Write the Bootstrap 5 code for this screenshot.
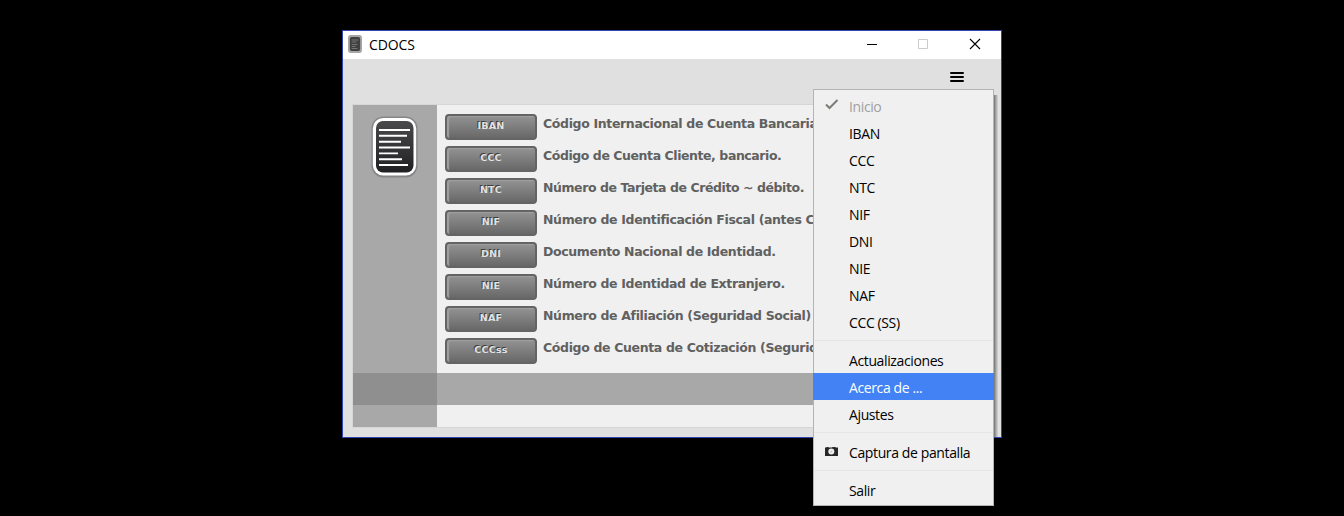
<!DOCTYPE html>
<html lang="es">
<head>
<meta charset="utf-8">
<title>CDOCS</title>
<link href="https://cdn.jsdelivr.net/npm/bootstrap@5.3.0/dist/css/bootstrap.min.css" rel="stylesheet">
<style>
body{background:#000;height:516px;overflow:hidden;font-family:"Open Sans","Noto Sans",sans-serif;font-size:14px;color:#000}
.app-window{width:660px;height:408px;margin:30px 0 0 342px;border:1px solid #3044b4;background:#e0e0e0}
.title-bar{height:28px;padding-left:5px}
.title-bar .app-name{font-size:14px;letter-spacing:-.1px;margin-left:6px;line-height:28px}
.tool-bar{height:45px;padding-right:37px;padding-top:12px}
.pane{margin:0 9px;height:324px;border:1px solid #d6d6d6;background:#f0f0f0}
.side{width:84px;background:#a8a8a8}
.side-band{height:32px;margin-top:auto;margin-bottom:22px;background:#8f8f8f}
.main-band{height:32px;background:#a8a8a8;margin-top:auto;margin-bottom:22px}
.doc-row{height:32px;padding-left:8px}
.doc-btn{width:92px;height:26px;border:2px solid #646464;border-radius:4px;padding:0 0 3px;background:linear-gradient(#939393,#686868);background-clip:border-box;box-shadow:inset 2px 1px 1px #a0a0a0;font:bold 9.5px/19px "DejaVu Sans",sans-serif;letter-spacing:.25px;color:#e2e2e2!important;text-shadow:-1px -1px 0 #3c3c3c}
.doc-text{font:bold 12.5px/20px "DejaVu Sans",sans-serif;letter-spacing:-.35px;color:#606060;margin-left:6px;white-space:nowrap}
.doc-text.tight{letter-spacing:-.43px}
.main-menu{left:813px;top:89px;width:181px;height:417px;margin:0;padding:2px 0;border:1px solid #b4b4b4;border-radius:0;background:#f0f0f0;font-size:14px}
.menu-shade{left:994px;top:95px;width:4px;height:342px;background:linear-gradient(90deg,#747474,#bcbcbc 70%,#d4d4d4)}
.main-menu .dropdown-item{height:27px;padding:2px 0 0 10px;line-height:25px;color:#000;letter-spacing:-.38px}
.main-menu .dropdown-item.disabled{color:#a0a0a0}
.main-menu .dropdown-item.active{background:#4282f4;color:#fff;margin:0 -1px;width:181px;padding-left:11px;font-weight:500}
.main-menu .glyph{width:16px;height:16px;margin:3px 9px 0 0;flex:none}
.main-menu .dropdown-divider{margin:5px 0;border-color:#e6e6e6;opacity:1}
</style>
<script src="https://cdn.jsdelivr.net/npm/bootstrap@5.3.0/dist/js/bootstrap.bundle.min.js"></script>
</head>
<body>
<div class="d-flex">
<main class="app-window d-flex flex-column flex-shrink-0">
  <header class="title-bar d-flex bg-white">
    <svg width="14" height="18" viewBox="0 0 15 18" preserveAspectRatio="none" style="margin:4px 1px 0 0"><rect x="0" y="0" width="15" height="18" rx="3" fill="#a6a6a6"/><rect x="2" y="2" width="11" height="14" rx="2" fill="#404040"/><path d="M4 5h7M4 7h5M4 9.5h6M4 11.5h4M4 13.5h6" stroke="#777"/></svg>
    <span class="app-name">CDOCS</span>
    <svg class="ms-auto" width="134" height="28" viewBox="0 0 134 28" fill="none"><path d="M0 13.5h10" stroke="#000"/><path d="M51.5 8.5h9v9h-9z" stroke="#ccc"/><path d="M103 8l10 10M113 8l-10 10" stroke="#000" stroke-width="1.1"/></svg>
  </header>
  <div class="tool-bar d-flex justify-content-end"><svg width="14" height="12" viewBox="0 0 14 12"><path d="M1 2h12M1 6h12M1 10h12" stroke="#000" stroke-width="2" stroke-linecap="round"/></svg></div>
  <section class="pane d-flex">
    <aside class="side d-flex flex-column">
      <svg width="48" height="64" viewBox="0 0 48 64" style="margin:10px 0 0 18px">
        <defs><linearGradient id="sheet" x2="0" y2="1"><stop stop-color="#4a4a4c"/><stop offset="1" stop-color="#202022"/></linearGradient></defs>
        <rect x=".5" y="1.5" width="46" height="61" rx="12" fill="#858585"/><rect x="1.8" y="3" width="43.4" height="57.5" rx="10.5" fill="#fff"/><rect x="5" y="6" width="37.5" height="51.5" rx="7" fill="url(#sheet)"/>
        <path d="M8 15h31M8 20.7h28M8 26.8h22M8 32.5h31M8 38.4h19M8 44.2h23M8 50h29" stroke="#fff" stroke-width="1.9"/>
      </svg>
      <div class="side-band"></div>
    </aside>
    <div class="flex-grow-1 d-flex flex-column overflow-hidden" style="padding-top:9px">
      <div class="doc-row d-flex"><button class="btn doc-btn">IBAN</button><span class="doc-text">Código Internacional de Cuenta Bancaria</span></div>
      <div class="doc-row d-flex"><button class="btn doc-btn">CCC</button><span class="doc-text tight">Código de Cuenta Cliente, bancario.</span></div>
      <div class="doc-row d-flex"><button class="btn doc-btn">NTC</button><span class="doc-text tight">Número de Tarjeta de Crédito ~ débito.</span></div>
      <div class="doc-row d-flex"><button class="btn doc-btn">NIF</button><span class="doc-text">Número de Identificación Fiscal (antes C</span></div>
      <div class="doc-row d-flex"><button class="btn doc-btn">DNI</button><span class="doc-text">Documento Nacional de Identidad.</span></div>
      <div class="doc-row d-flex"><button class="btn doc-btn">NIE</button><span class="doc-text">Número de Identidad de Extranjero.</span></div>
      <div class="doc-row d-flex"><button class="btn doc-btn">NAF</button><span class="doc-text">Número de Afiliación (Seguridad Social)</span></div>
      <div class="doc-row d-flex"><button class="btn doc-btn">CCCss</button><span class="doc-text">Código de Cuenta de Cotización (Segurid</span></div>
      <div class="main-band"></div>
    </div>
  </section>
</main>
</div>
<div class="menu-shade position-absolute"></div>
<div class="main-menu dropdown-menu d-block position-absolute">
  <a class="dropdown-item disabled d-flex"><svg class="glyph" viewBox="0 0 16 16"><path d="M2 7.5L5.5 11 13.5 3" fill="none" stroke="#7c7c76" stroke-width="2"/></svg>Inicio</a>
  <a class="dropdown-item d-flex"><span class="glyph"></span>IBAN</a>
  <a class="dropdown-item d-flex"><span class="glyph"></span>CCC</a>
  <a class="dropdown-item d-flex"><span class="glyph"></span>NTC</a>
  <a class="dropdown-item d-flex"><span class="glyph"></span>NIF</a>
  <a class="dropdown-item d-flex"><span class="glyph"></span>DNI</a>
  <a class="dropdown-item d-flex"><span class="glyph"></span>NIE</a>
  <a class="dropdown-item d-flex"><span class="glyph"></span>NAF</a>
  <a class="dropdown-item d-flex"><span class="glyph"></span>CCC (SS)</a>
  <hr class="dropdown-divider">
  <a class="dropdown-item d-flex"><span class="glyph"></span>Actualizaciones</a>
  <a class="dropdown-item active d-flex"><span class="glyph"></span>Acerca de ...</a>
  <a class="dropdown-item d-flex"><span class="glyph"></span>Ajustes</a>
  <hr class="dropdown-divider">
  <a class="dropdown-item d-flex"><svg class="glyph" viewBox="0 0 16 16"><path d="M1 7V5.5h1.5V5h2v.5H8l.6-.5h2.6l.6.5H14V14H1z" transform="translate(0 -1)" fill="#262626"/><circle cx="7.3" cy="8.6" r="3" fill="#f0f0f0"/><circle cx="7.3" cy="8.6" r="1.2" fill="#ccc"/></svg>Captura de pantalla</a>
  <hr class="dropdown-divider">
  <a class="dropdown-item d-flex"><span class="glyph"></span>Salir</a>
</div>
</body>
</html>
